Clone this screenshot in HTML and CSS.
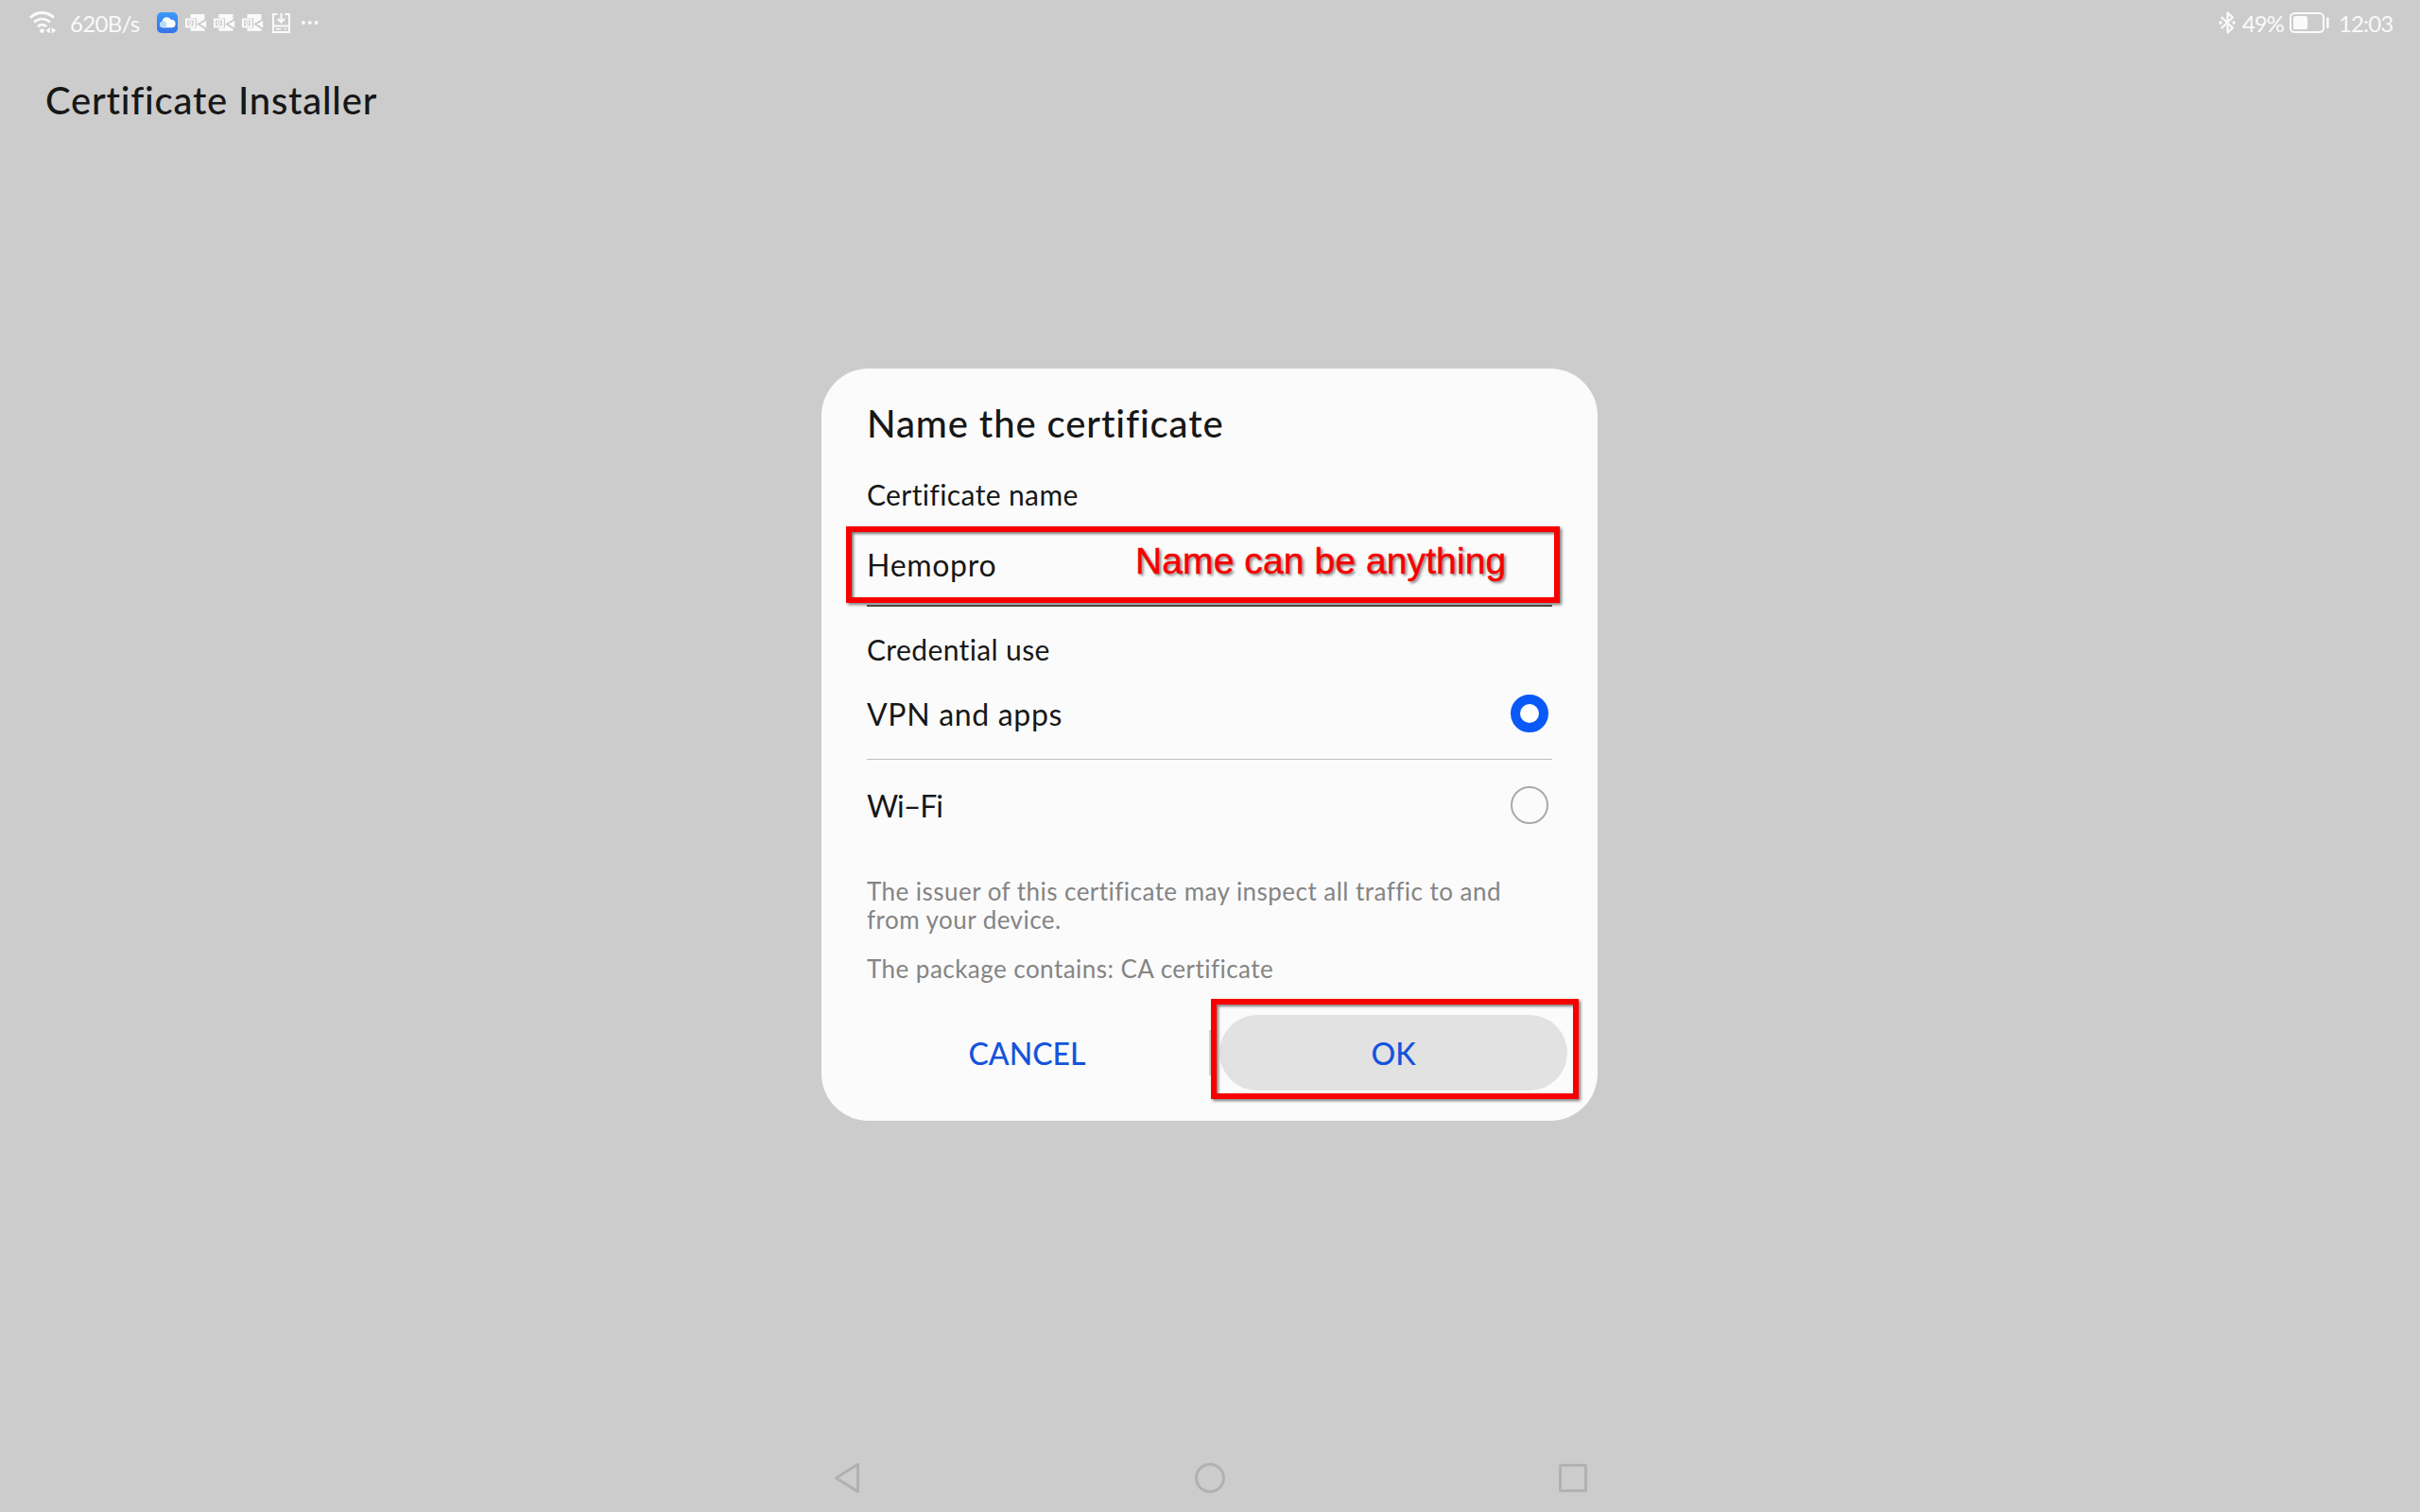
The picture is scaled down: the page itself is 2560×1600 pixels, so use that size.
FILE: index.html
```html
<!DOCTYPE html>
<html lang="en">
<head>
<meta charset="utf-8">
<title>Certificate Installer</title>
<link rel="stylesheet" href="styles.css">
</head>
<body>
<header class="status">
  <div class="status-left">
    <svg class="wifi" width="30" height="24" viewBox="0 0 30 24" fill="none" stroke="currentColor">
      <path d="M2 6.600C9.500-.2 19.500-.2 27 6.600" stroke-width="2.800"/>
      <path d="M6 11.500c5.300-4.600 11.700-4.600 17 0" stroke-width="2.800"/>
      <path d="M9.800 16.200c3-2.600 6.400-2.600 9.400 0" stroke-width="2.600"/>
      <circle cx="14.500" cy="20.600" r="2.300" fill="currentColor" stroke="none"/>
      <path d="M23 17v6.500l-4.500-3.200zM24.800 17v6.500l4.500-3.200z" fill="currentColor" stroke="none"/>
    </svg>
    <span class="speed">620B/s</span>
    <svg class="cloud" width="22" height="22" viewBox="0 0 22 22">
      <defs><linearGradient id="sky" x1="0" y1="0" x2="0" y2="1"><stop offset="0" stop-color="#3a9bf8"/><stop offset="1" stop-color="#3671e6"/></linearGradient></defs>
      <rect width="22" height="22" rx="5" fill="url(#sky)"/>
      <path d="M6 16.200a3.300 3.300 0 0 1-.4-6.500 5 5 0 0 1 9.400-1.800 4.200 4.200 0 0 1 1.200 8.300z" fill="#fff"/>
      <path d="M6 16.200a3.300 3.300 0 0 1-.4-6.500 3.600 3.600 0 0 1 4.400 1.300 3.500 3.500 0 0 1-1.500 5.200z" fill="#b9dcfc"/>
    </svg>
    <svg class="mail" width="23" height="18" viewBox="0 0 23 18"><use href="#outlook"/></svg>
    <svg class="mail" width="23" height="18" viewBox="0 0 23 18"><use href="#outlook"/></svg>
    <svg class="mail" width="23" height="18" viewBox="0 0 23 18">
      <g id="outlook">
        <path d="M5.500 0h15v17.800h-15z" fill="currentColor"/>
        <path d="M0 4h12v10.500H0z" fill="#ccc"/>
        <path d="M22.500 4.500v12.500L12 10.500z" fill="#ccc"/>
        <path d="M22.200 6.800v7.700L15.800 10.600z" fill="currentColor"/>
        <rect x="1" y="5.500" width="8.800" height="7.800" fill="none" stroke="currentColor" stroke-width="2"/>
        <ellipse cx="5.400" cy="9.400" rx="1.500" ry="1.700" fill="none" stroke="currentColor" stroke-width="1.300"/>
      </g>
    </svg>
    <svg class="drive" width="19" height="21" viewBox="0 0 19 21" fill="none" stroke="currentColor" stroke-width="2">
      <path d="M5.500 1H1v19h17V1h-4.500M1 13.500h17"/>
      <path d="M9.500 0v9M5.800 5.800l3.700 3.700 3.700-3.700"/>
      <path d="M4 16.800h5M13 16.800h2.200" stroke-width="1.600"/>
    </svg>
    <svg class="more" width="18" height="4" viewBox="0 0 18 4" fill="currentColor"><circle cx="2" cy="2" r="1.900"/><circle cx="8.800" cy="2" r="1.900"/><circle cx="15.600" cy="2" r="1.900"/></svg>
  </div>
  <div class="status-right">
    <svg width="18" height="24" viewBox="0 0 18 24" fill="none" stroke="currentColor" stroke-width="2.300">
      <path d="M2.800 6l12 11.500L9.500 22.500V1.500l5.300 5L2.800 18" stroke-linejoin="round"/>
      <path d="M0 12l2-2.200L4 12l-2 2.200zM14 12l2-2.200 2 2.200-2 2.200z" fill="currentColor" stroke="none"/>
    </svg>
    <span class="percent">49%</span>
    <svg class="battery" width="42" height="22" viewBox="0 0 42 22">
      <rect x="1" y="1" width="35" height="20" rx="4.500" fill="none" stroke="currentColor" stroke-width="2"/>
      <rect x="4" y="4" width="15" height="14" rx="2" fill="currentColor"/>
      <rect x="39" y="5.500" width="2.700" height="11.500" rx="1" fill="currentColor"/>
    </svg>
    <span class="clock">12:03</span>
  </div>
</header>
<h1 class="app-title">Certificate Installer</h1>
<main class="dialog">
  <h2 class="dialog-title">Name the certificate</h2>
  <div class="label">Certificate name</div>
  <div class="field"><span class="value">Hemopro</span>
    <div class="mark mark-name">Name can be anything</div>
  </div>
  <div class="label">Credential use</div>
  <div class="option first"><span class="vpn">VPN and apps</span><i class="radio on"></i></div>
  <div class="option"><span class="wf">Wi–Fi</span><i class="radio"></i></div>
  <p class="note issuer">The issuer of this certificate may inspect all traffic to and<br>from your device.</p>
  <p class="note">The package contains: CA certificate</p>
  <div class="actions">
    <div class="button cancel">CANCEL</div>
    <i class="separator"></i>
    <div class="button ok">OK<div class="mark mark-ok"></div></div>
  </div>
</main>
<nav class="nav">
  <svg width="28" height="34" viewBox="0 0 28 34"><path d="M25.500 2.500v29L2.500 17z"/></svg>
  <svg width="32" height="32" viewBox="0 0 32 32"><circle cx="16" cy="16" r="14.500"/></svg>
  <svg width="30" height="30" viewBox="0 0 30 30"><rect x="1.500" y="1.500" width="27" height="27" rx="1"/></svg>
</nav>
</body>
</html>
```
FILE: styles.css
```css
* { box-sizing: border-box; margin: 0; padding: 0; }
body {
  width: 2560px; height: 1600px; overflow: hidden;
  display: flex; flex-direction: column;
  background: #ccc; color: #171717;
  font-family: Lato, "Noto Sans", sans-serif;
  font-variant-ligatures: none;
}
svg { display: block; flex: none; }
.status { height: 50px; display: flex; justify-content: space-between; padding: 0 28px 0 30px; color: #fafafa; font-size: 24px; line-height: 50px; }
.status-left, .status-right { display: flex; align-items: center; height: 50px; padding-bottom: 2px; }
.status span { white-space: nowrap; }
.speed { width: 76px; margin-left: 14px; letter-spacing: -0.7px; padding-top: 2px; }
.cloud { margin-left: 16px; }
.mail { margin-left: 7px; }
.cloud + .mail { margin-left: 8px; }
.drive { margin-left: 9px; }
.more { margin-left: 12px; }
.percent { width: 46px; margin-left: 7px; letter-spacing: -1.2px; padding-top: 2px; }
.battery { margin-left: 4px; }
.clock { width: 58px; margin-left: 10px; letter-spacing: -0.9px; padding-top: 2px; }
.app-title { margin: 26px 0 0 48px; font-size: 40px; line-height: 60px; font-weight: 500; letter-spacing: 0.77px; }
.dialog { width: 821px; height: 796px; margin: 254px 0 0 869px; padding: 28px 48px 32px; border-radius: 50px; background: #fbfbfb; }
.dialog-title { font-size: 40px; line-height: 60px; font-weight: 500; letter-spacing: 0.9px; }
.label { margin-top: 25px; font-size: 30px; line-height: 40px; letter-spacing: 0.38px; }
.field { position: relative; height: 99px; padding-top: 35px; border-bottom: 2px solid #555; font-size: 32px; line-height: 40px; }
.value { letter-spacing: 0.7px; }
.mark { position: absolute; border: 6px solid #f80000; box-shadow: 2px 2px 3px rgba(0,0,0,.5), inset 2px 2px 3px rgba(0,0,0,.5); }
.mark-name { left: -22px; top: 14px; width: 755px; height: 81px; padding: 11px 0 0 300px; color: #f40000; font: 39px/40px "Liberation Sans", Arial, sans-serif; letter-spacing: 0.1px; white-space: nowrap; -webkit-text-stroke: 0.5px #f40000; text-shadow: 2px 2px 3px rgba(0,0,0,.5); }
.option { display: flex; justify-content: space-between; padding: 28px 4px 0 0; font-size: 32px; line-height: 40px; }
.option.first { padding-bottom: 28px; border-bottom: 1px solid #bfbfbf; }
.option span { padding-top: 1px; height: 40px; }
.vpn { letter-spacing: 0.67px; }
.wf { letter-spacing: -1px; }
.radio { width: 40px; height: 40px; border: 2px solid #aaa; border-radius: 50%; }
.radio.on { border: 10px solid #0a59f7; background: #fff; }
.note { margin-top: 22px; color: #848484; font-size: 26px; line-height: 30px; letter-spacing: 0.46px; }
.issuer { margin-top: 56px; }
.actions { display: flex; align-items: center; height: 80px; margin: 34px -16px 0; color: #1553dc; font-size: 32px; font-weight: 500; line-height: 80px; text-align: center; }
.button { position: relative; height: 80px; padding-top: 1px; }
.cancel { width: 371px; }
.separator { width: 2px; height: 48px; margin: 0 9px 0 7px; background: #d4d4d4; }
.ok { width: 368px; border-radius: 40px; background: #e2e2e2; }
.mark-ok { left: -9px; top: -17px; width: 389px; height: 106px; }
.nav { display: flex; justify-content: space-between; align-items: center; width: 797px; height: 34px; margin: 361px 0 0 882px; fill: none; stroke: #b1b1b1; stroke-width: 3; stroke-linejoin: round; }
```
